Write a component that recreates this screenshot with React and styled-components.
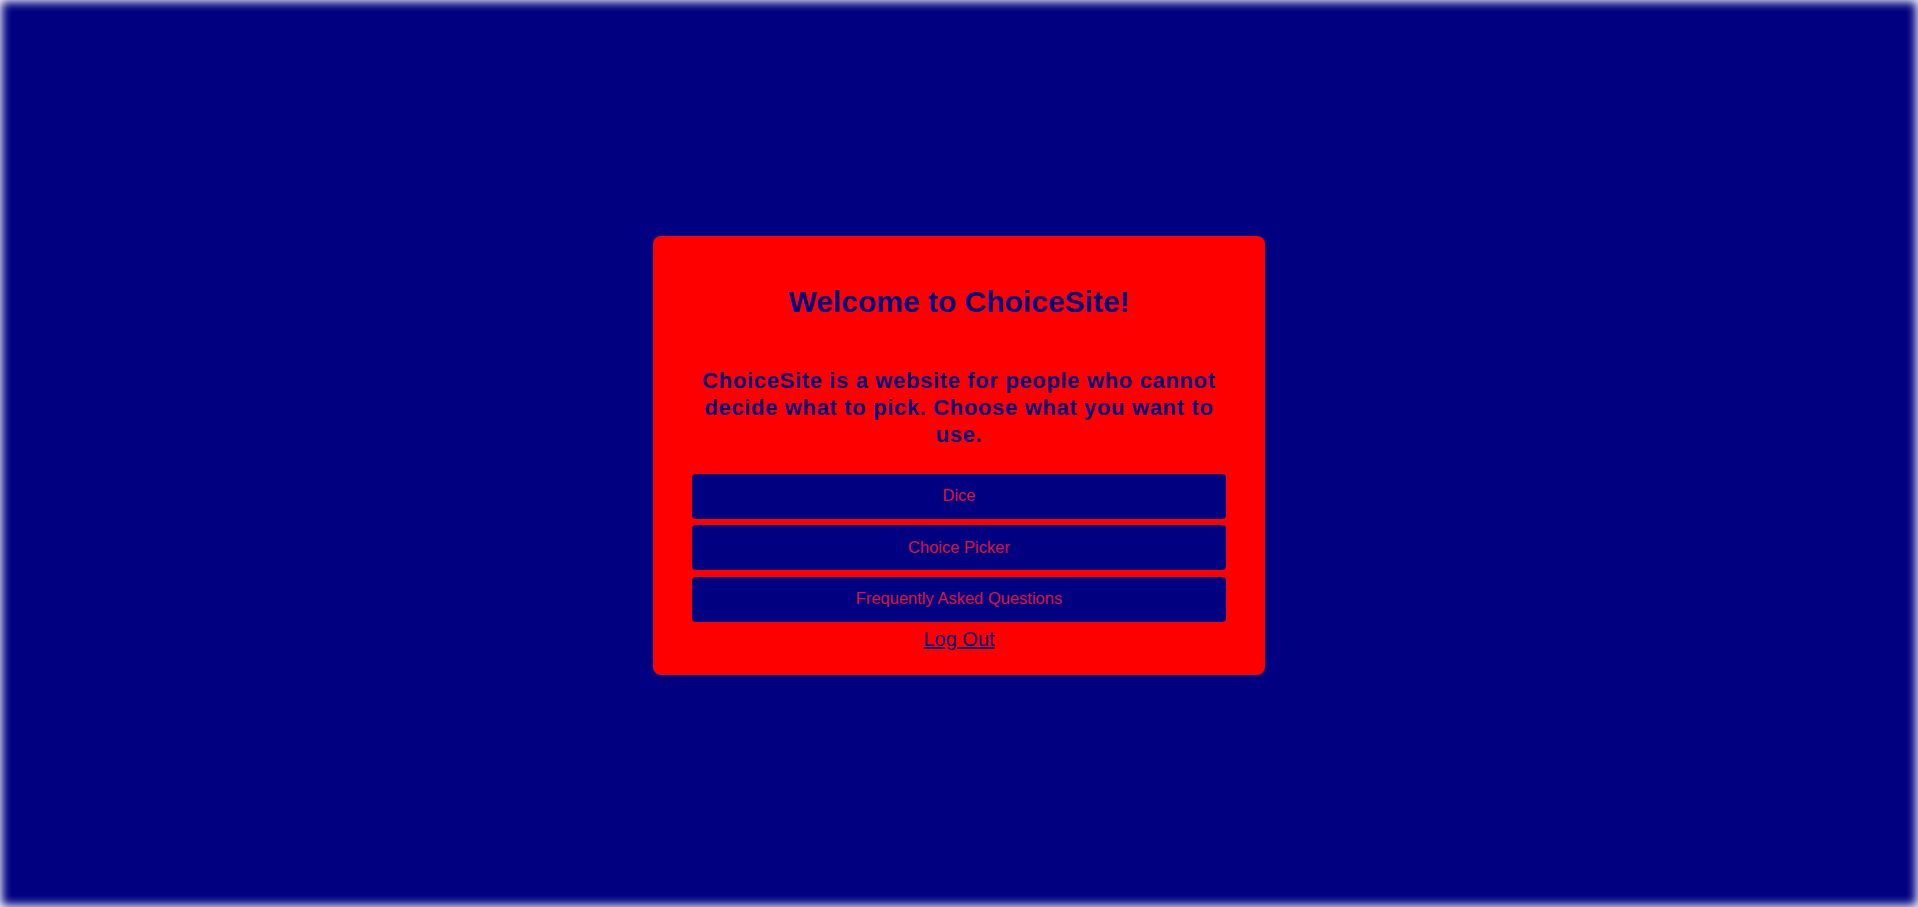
import React from "react";
import styled, { createGlobalStyle } from "styled-components";

const GlobalStyle = createGlobalStyle`
  html, body {
    margin: 0;
    padding: 0;
    background: #000080;
  }
  * { box-sizing: border-box; }
`;

const Page = styled.div`
  width: 100vw;
  height: 100vh;
  background: #000080;
  box-shadow: inset 0 0 10px 2px rgba(255, 255, 255, 0.95);
  display: flex;
  align-items: center;
  justify-content: center;
  padding-top: 3px;
  font-family: "Liberation Sans", Arial, sans-serif;
`;

const Card = styled.div`
  width: 612px;
  background: #ff0000;
  border-radius: 8px;
  padding: 49px 39px 24px;
  display: flex;
  flex-direction: column;
  align-items: stretch;
  text-align: center;
`;

const Title = styled.h1`
  margin: 0;
  font-size: 30px;
  line-height: 34px;
  font-weight: 700;
  color: #000080;
`;

const Lead = styled.h3`
  margin: 48px 0 26px;
  font-size: 22px;
  line-height: 27px;
  letter-spacing: 0.65px;
  font-weight: 700;
  color: #000080;
`;

const Menu = styled.nav`
  display: flex;
  flex-direction: column;
  gap: 6.5px;
`;

const MenuButton = styled.button`
  height: 45px;
  width: 100%;
  border: none;
  border-radius: 4px;
  background: #000080;
  color: #dc143c;
  font-family: "Liberation Sans", Arial, sans-serif;
  font-size: 16.5px;
  line-height: 19px;
  padding: 0 0 1px;
  cursor: pointer;
`;

const LogOut = styled.a`
  display: block;
  margin-top: 6px;
  font-size: 20px;
  line-height: 23px;
  color: #000080;
  text-decoration: underline;
  cursor: pointer;
`;

export default function App() {
  return (
    <>
      <GlobalStyle />
      <Page>
        <Card>
          <Title>Welcome to ChoiceSite!</Title>
          <Lead>
            ChoiceSite is a website for people who cannot decide what to pick.
            Choose what you want to use.
          </Lead>
          <Menu>
            <MenuButton>Dice</MenuButton>
            <MenuButton>Choice Picker</MenuButton>
            <MenuButton>Frequently Asked Questions</MenuButton>
          </Menu>
          <LogOut>Log Out</LogOut>
        </Card>
      </Page>
    </>
  );
}
